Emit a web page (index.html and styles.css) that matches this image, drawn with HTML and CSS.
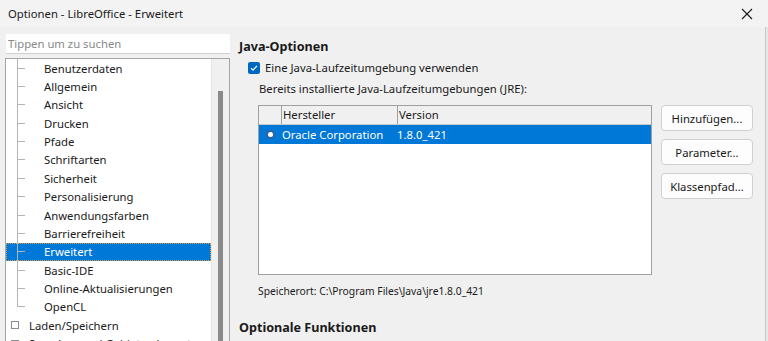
FILE: index.html
```html
<!DOCTYPE html>
<html>
<head>
  <meta charset="UTF-8">
  <title>Optionen - LibreOffice - Erweitert</title>
  <link rel="stylesheet" href="styles.css">
</head>
<body>
  <div class="window">
    <div class="titlebar">
      <span class="title">Optionen - LibreOffice - Erweitert</span>
      <svg class="close" width="12" height="12" viewBox="0 0 12 12">
        <path d="M1 1 L11 11 M11 1 L1 11" stroke="#1a1a1a" stroke-width="1.1" fill="none"/>
      </svg>
    </div>

    <div class="main">
      <!-- Left: search and category tree -->
      <div class="sidebar">
        <div class="search">Tippen um zu suchen</div>
        <div class="tree">
          <div class="tree-items">
            <div class="row"><span class="guide"></span><span class="label">Benutzerdaten</span></div>
            <div class="row"><span class="guide"></span><span class="label">Allgemein</span></div>
            <div class="row"><span class="guide"></span><span class="label">Ansicht</span></div>
            <div class="row"><span class="guide"></span><span class="label">Drucken</span></div>
            <div class="row"><span class="guide"></span><span class="label">Pfade</span></div>
            <div class="row"><span class="guide"></span><span class="label">Schriftarten</span></div>
            <div class="row"><span class="guide"></span><span class="label">Sicherheit</span></div>
            <div class="row"><span class="guide"></span><span class="label">Personalisierung</span></div>
            <div class="row"><span class="guide"></span><span class="label">Anwendungsfarben</span></div>
            <div class="row"><span class="guide"></span><span class="label">Barrierefreiheit</span></div>
            <div class="row selected"><span class="guide"></span><span class="label">Erweitert</span></div>
            <div class="row"><span class="guide"></span><span class="label">Basic-IDE</span></div>
            <div class="row"><span class="guide"></span><span class="label">Online-Aktualisierungen</span></div>
            <div class="row last"><span class="guide"></span><span class="label">OpenCL</span></div>
            <div class="row top"><span class="expander"></span><span class="label">Laden/Speichern</span></div>
            <div class="row top"><span class="expander"></span><span class="label">Sprachen und Gebietsschemata</span></div>
          </div>
          <div class="scrollbar"><div class="thumb"></div></div>
        </div>
      </div>

      <!-- Right: Java options -->
      <div class="content">
        <h2>Java-Optionen</h2>
        <label class="check">
          <span class="checkbox">
            <svg width="8" height="8" viewBox="0 0 8 8"><path d="M1 4.2 L3 6.2 L7 1.8" stroke="#fff" stroke-width="1.2" fill="none"/></svg>
          </span>
          Eine Java-Laufzeitumgebung verwenden
        </label>
        <div class="note">Bereits installierte Java-Laufzeitumgebungen (JRE):</div>

        <div class="jre">
          <div class="table">
            <div class="thead">
              <span class="col-radio"></span>
              <span class="col-vendor">Hersteller</span>
              <span class="col-version">Version</span>
            </div>
            <div class="trow selected">
              <span class="col-radio"><span class="dot"></span></span>
              <span class="col-vendor">Oracle Corporation</span>
              <span class="col-version">1.8.0_421</span>
            </div>
          </div>
          <div class="buttons">
            <button>Hinzufügen...</button>
            <button>Parameter...</button>
            <button>Klassenpfad...</button>
          </div>
        </div>

        <div class="location">Speicherort: C:\Program Files\Java\jre1.8.0_421</div>

        <h2>Optionale Funktionen</h2>
      </div>
      <div class="edge"></div>
    </div>
  </div>
</body>
</html>
```

FILE: styles.css
```css
body {
  margin: 0;
  font-family: "Noto Sans", "Open Sans", sans-serif;
  font-size: 11.3px;
  color: #1a1a1a;
  background-color: #f0f0f0;
  overflow: hidden;
}
.window {
  width: 768px;
  height: 341px;
  overflow: hidden;
}
.titlebar {
  height: 27px;
  display: flex;
  align-items: center;
  justify-content: space-between;
  padding: 0 15px 0 8px;
  background-color: #f3f3f3;
}
.title {
  font-size: 11.3px;
}
.main {
  display: flex;
  height: 314px;
}
.sidebar {
  width: 225px;
  padding: 7px 0 0 5px;
  display: flex;
  flex-direction: column;
}
.search {
  margin-left: 1px;
  height: 19px;
  line-height: 19px;
  padding-left: 2px;
  background-color: #fff;
  color: #8a8a8a;
  border-bottom: 1px solid #d0d0d0;
}
.tree {
  margin-top: 4px;
  flex: 1;
  display: flex;
  border: 1px solid #a5a5a5;
  border-bottom: none;
  background-color: #fff;
  overflow: hidden;
}
.tree-items {
  flex: 1;
}
.row {
  height: 18.36px;
  display: flex;
  align-items: center;
  padding-left: 11px;
}
.row .label {
  margin-left: 18px;
  white-space: nowrap;
}
.guide {
  align-self: stretch;
  width: 8px;
  border-left: 1px solid #b4b4b4;
  display: flex;
  align-items: center;
}
.guide::after {
  content: "";
  width: 7px;
  border-top: 1px solid #b4b4b4;
}
.row.last .guide {
  align-self: flex-start;
  height: 50%;
  align-items: flex-end;
}
.row.top {
  padding-left: 5px;
}
.row.top .label {
  margin-left: 10px;
}
.expander {
  width: 6px;
  height: 6px;
  border: 1px solid #8c8c8c;
}
.row.selected {
  background-color: #0078d7;
  color: #fff;
  outline: 1px dotted #e0a050;
  outline-offset: -1px;
}
.scrollbar {
  width: 17px;
  background-color: #f0f0f0;
  border-left: 1px solid #e4e4e4;
  display: flex;
  justify-content: center;
  padding-top: 32px;
}
.thumb {
  width: 5px;
  height: 300px;
  background-color: #8a8a8a;
}
.content {
  flex: 1;
  padding: 12px 0 0 9px;
}
h2 {
  margin: 0;
  font-size: 12.6px;
  font-weight: bold;
  line-height: 16px;
}
.check {
  display: flex;
  align-items: center;
  margin: 5px 0 0 9px;
  line-height: 16px;
}
.checkbox {
  width: 12px;
  height: 12px;
  border-radius: 2px;
  background-color: #0067c0;
  display: flex;
  align-items: center;
  justify-content: center;
  margin-right: 5px;
}
.note {
  margin: 5px 0 0 20px;
  line-height: 16px;
}
.jre {
  display: flex;
  margin: 8px 0 0 19px;
}
.table {
  width: 392px;
  height: 168px;
  border: 1px solid #a0a0a0;
  background-color: #fff;
}
.thead {
  display: flex;
  height: 18px;
  line-height: 18px;
  background-color: #f0f0f0;
  border-bottom: 1px solid #c8c8c8;
}
.thead span {
  border-right: 1px solid #a0a0a0;
}
.thead .col-version {
  border-right: none;
}
.col-radio {
  width: 22px;
  display: flex;
  align-items: center;
  justify-content: center;
}
.col-vendor {
  width: 114px;
  padding-left: 1px;
}
.col-version {
  flex: 1;
  padding-left: 1px;
}
.trow {
  display: flex;
  height: 19px;
  line-height: 19px;
}
.trow.selected {
  background-color: #0078d7;
  color: #fff;
}
.dot {
  width: 5px;
  height: 5px;
  border-radius: 50%;
  background-color: #fff;
  box-shadow: 0 0 0 2px #2a64a8;
}
.buttons {
  display: flex;
  flex-direction: column;
  gap: 8px;
  margin-left: 9px;
}
button {
  width: 92px;
  height: 26px;
  padding: 0;
  font-family: inherit;
  font-size: 11.3px;
  color: #1a1a1a;
  background-color: #fdfdfd;
  border: 1px solid #d0d0d0;
  border-radius: 4px;
}
.location {
  margin: 8px 0 0 19px;
  font-size: 10.3px;
  line-height: 16px;
}
.content h2:last-child {
  margin-top: 21px;
}
.edge {
  width: 2px;
  border-left: 1px solid #c8c8c8;
  background-color: #e6e6e6;
}
```
